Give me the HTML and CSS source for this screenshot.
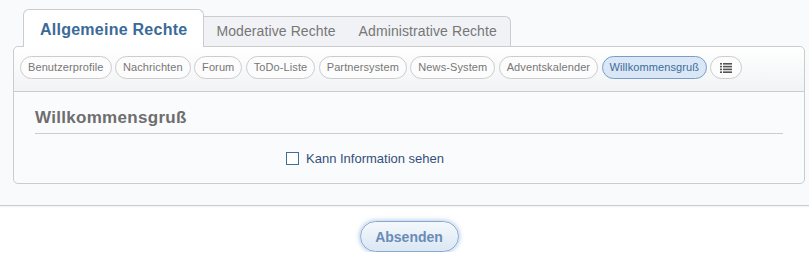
FILE: index.html
```html
<!DOCTYPE html>
<html lang="de">
<head>
    <meta charset="UTF-8">
    <title>Benutzergruppe bearbeiten</title>
    <link rel="stylesheet" href="styles.css">
</head>
<body>
<form class="content">
    <ul class="tab-menu">
        <li class="tab active">Allgemeine Rechte</li>
        <li class="tab-group">
            <span class="tab">Moderative Rechte</span>
            <span class="tab">Administrative Rechte</span>
        </li>
    </ul>
    <div class="tab-box">
        <div class="sub-tabs">
            <span class="pill">Benutzerprofile</span>
            <span class="pill">Nachrichten</span>
            <span class="pill">Forum</span>
            <span class="pill">ToDo-Liste</span>
            <span class="pill">Partnersystem</span>
            <span class="pill">News-System</span>
            <span class="pill">Adventskalender</span>
            <span class="pill selected">Willkommensgruß</span>
            <span class="pill icon">
                <svg width="12" height="10" viewBox="0 0 12 10">
                    <rect x="0" y="0" width="2" height="1.6" fill="#555"/>
                    <rect x="3" y="0" width="9" height="1.6" fill="#555"/>
                    <rect x="0" y="2.8" width="2" height="1.6" fill="#555"/>
                    <rect x="3" y="2.8" width="9" height="1.6" fill="#555"/>
                    <rect x="0" y="5.6" width="2" height="1.6" fill="#555"/>
                    <rect x="3" y="5.6" width="9" height="1.6" fill="#555"/>
                    <rect x="0" y="8.4" width="2" height="1.6" fill="#555"/>
                    <rect x="3" y="8.4" width="9" height="1.6" fill="#555"/>
                </svg>
            </span>
        </div>
        <div class="panel">
            <h3 class="panel-title">Willkommensgruß</h3>
            <div class="option-row">
                <label class="option"><span class="checkbox"></span>Kann Information sehen</label>
            </div>
        </div>
    </div>
</form>
<div class="submit-row">
    <button class="submit" type="button">Absenden</button>
</div>
</body>
</html>
```

FILE: styles.css
```css
body {
    margin: 0;
    background-color: #fff;
    font-family: 'Liberation Sans', Arial, sans-serif;
}
.content {
    display: block;
    background-color: #f9fafc;
    border-bottom: 1px solid #ccc;
    box-shadow: 0 1px 2px rgba(0, 0, 0, 0.06);
    padding: 9px 4px 21px 13px;
}
.tab-menu {
    list-style: none;
    margin: 0;
    padding: 0 0 0 10px;
    display: flex;
    align-items: flex-end;
}
.tab {
    display: block;
    color: #777;
    font-size: 14px;
    letter-spacing: 0.1px;
    padding: 0 11px 0 12px;
}
.tab.active {
    position: relative;
    z-index: 1;
    margin-bottom: -1px;
    height: 37px;
    line-height: 39px;
    padding: 0 16px 0 16px;
    font-size: 16px;
    font-weight: bold;
    letter-spacing: 0.25px;
    color: #3a6a98;
    background-color: #fff;
    border: 1px solid #ccc;
    border-bottom: none;
    border-radius: 6px 6px 0 0;
}
.tab-group {
    display: flex;
    height: 29px;
    line-height: 29px;
    background-color: #f0f2f5;
    border: 1px solid #ccc;
    border-left: none;
    border-bottom: none;
    border-radius: 0 6px 0 0;
    padding-right: 2px;
}
.tab-box {
    border: 1px solid #ccc;
    border-radius: 5px;
    background-color: #fafbfd;
}
.sub-tabs {
    display: flex;
    gap: 3.4px;
    height: 45px;
    padding: 9px 6px 0;
    box-sizing: border-box;
    border-bottom: 1px solid #ccc;
    border-radius: 5px 5px 0 0;
    background: linear-gradient(#fff, #f1f3f6);
}
.pill {
    height: 21px;
    line-height: 21px;
    padding: 0 7px;
    font-size: 11px;
    letter-spacing: 0.1px;
    color: #777;
    background-color: #fcfcfc;
    border: 1px solid #ccc;
    border-radius: 12px;
}
.pill.selected {
    color: #3e6c9a;
    background-color: #d9e7f6;
    border-color: #7d9cc4;
}
.pill.icon {
    display: flex;
    align-items: center;
    padding: 0 9px;
}
.panel {
    padding: 16px 21px 17px;
}
.panel-title {
    margin: 0;
    padding-bottom: 5px;
    font-size: 17px;
    line-height: 20px;
    letter-spacing: 0.3px;
    color: #6e6e6e;
    border-bottom: 1px solid #ccc;
}
.option-row {
    padding: 17px 0 0 251px;
}
.option {
    display: flex;
    align-items: center;
    gap: 7px;
    font-size: 13px;
    color: #34507a;
}
.checkbox {
    width: 11px;
    height: 11px;
    border: 1px solid #3d6f9c;
    background-color: #fff;
}
.submit-row {
    display: flex;
    justify-content: center;
    padding: 15px 0 0 9px;
}
.submit {
    width: 99px;
    height: 31px;
    font-family: 'Liberation Sans', Arial, sans-serif;
    font-size: 14px;
    font-weight: bold;
    color: #6a8bb6;
    background: linear-gradient(#f4f8fc, #dbe7f4);
    border: 1px solid #8aa9cf;
    border-radius: 16px;
    box-shadow: 0 0 5px rgba(90, 140, 200, 0.6);
}
```
